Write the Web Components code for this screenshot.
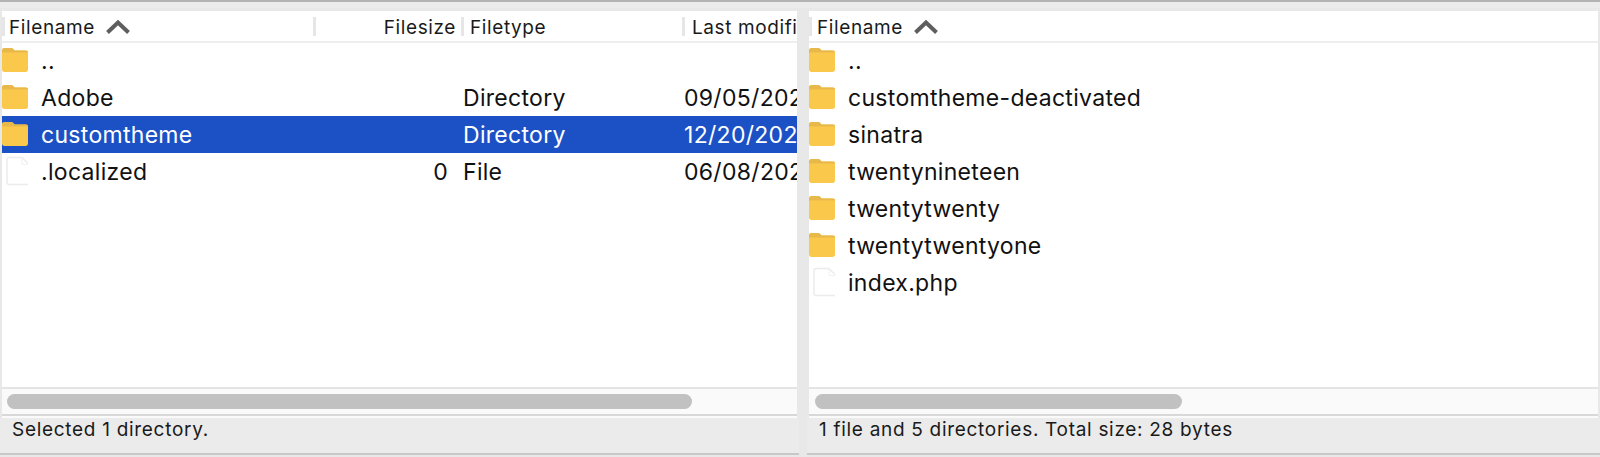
<!DOCTYPE html>
<html>
<head>
<meta charset="utf-8">
<style>
html, body { margin: 0; height: 100%; overflow: hidden; background: #e8e8e8; }
body { font-family: Inter, "Liberation Sans", sans-serif; color: #111; }
</style>
</head>
<body>

<ft-window>
  <ft-pane status="Selected 1 directory." thumb="685" inset="5" columns>
    <ft-row icon="folder" slot="rows"><span>..</span></ft-row>
    <ft-row icon="folder" slot="rows"><span>Adobe</span><span slot="type">Directory</span><span slot="date">09/05/2021</span></ft-row>
    <ft-row icon="folder" selected slot="rows"><span>customtheme</span><span slot="type">Directory</span><span slot="date">12/20/2021</span></ft-row>
    <ft-row icon="file" slot="rows"><span>.localized</span><span slot="size">0</span><span slot="type">File</span><span slot="date">06/08/2021</span></ft-row>
  </ft-pane>
  <ft-pane status="1 file and 5 directories. Total size: 28 bytes" thumb="367" inset="6">
    <ft-row icon="folder" slot="rows"><span>..</span></ft-row>
    <ft-row icon="folder" slot="rows"><span>customtheme-deactivated</span></ft-row>
    <ft-row icon="folder" slot="rows"><span>sinatra</span></ft-row>
    <ft-row icon="folder" slot="rows"><span>twentynineteen</span></ft-row>
    <ft-row icon="folder" slot="rows"><span>twentytwenty</span></ft-row>
    <ft-row icon="folder" slot="rows"><span>twentytwentyone</span></ft-row>
    <ft-row icon="file" slot="rows"><span>index.php</span></ft-row>
  </ft-pane>
</ft-window>

<script>
const COLS = '311px 148px 221px 1fr';

const ICONS = {
  folder: `<svg class="folder" width="26" height="26" viewBox="1 0 26 26">
    <path d="M1 5V3.500C1 2 2 1 3.500 1H10C11.500 1 12.500 2 13.500 3.500H24.500C26 3.500 27 4.500 27 6V22.500C27 24 26 25 24.500 25H3.500C2 25 1 24 1 22.500Z" fill="#fac94c"/>
    <path d="M1 5.500H27V4.500C26.500 3.800 25.800 3.500 24.500 3.500H13.500C12.800 2.500 12 1 10 1H3.500C2 1 1 2 1 3.500Z" fill="#e8b94a"/>
  </svg>`,
  file: `<svg class="file" width="26" height="30" viewBox="-0.500 0 26 30">
    <path d="M6.500 1.500H19.500L26.500 8.500V26.500C26.500 27.700 25.700 28.500 24.500 28.500H6.500C5.300 28.500 4.500 27.700 4.500 26.500V3.500C4.500 2.300 5.300 1.500 6.500 1.500Z" fill="#fff" stroke="#ececec" stroke-width="1.500"/>
    <path d="M19.500 1.500V8.500H26.500" fill="none" stroke="#f2f2f2" stroke-width="1.200"/>
  </svg>`
};

class FtWindow extends HTMLElement {
  constructor() {
    super();
    this.attachShadow({mode: 'open'}).innerHTML = `
      <style>
        :host { display: flex; flex-direction: column; height: 457px; background: #e8e8e8; }
        .top { height: 2px; background: #b4b4b4; }
        .band { height: 6px; background: #ececec; }
        .panes { flex: 1; display: grid; grid-template-columns: 795px 789px; column-gap: 12px; padding: 3px 2px 0; min-height: 0; }
      </style>
      <div class="top"></div>
      <div class="band"></div>
      <div class="panes"><slot></slot></div>`;
  }
}

class FtPane extends HTMLElement {
  constructor() {
    super();
    const columns = this.hasAttribute('columns');
    const inset = Number(this.getAttribute('inset'));
    this.attachShadow({mode: 'open'}).innerHTML = `
      <style>
        :host { display: flex; flex-direction: column; min-width: 0; }
        .list { height: 376px; background: #fff; display: flex; flex-direction: column; overflow: hidden; }
        .head { height: 30px; border-bottom: 2px solid #eeeeee; margin-bottom: -1px; flex: none; display: grid; grid-template-columns: ${COLS}; font-size: 19px; letter-spacing: .6px; }
        .cell { background: linear-gradient(#e6e6e6, #e6e6e6) no-repeat left 6px / 3px 19px; padding: 3px 0 0 10px; white-space: nowrap; overflow: hidden; display: flex; align-items: center; color: #1a1a1a; }
        .cell.right { justify-content: flex-end; padding-left: 0; padding-right: 5px; }
        .cell.first { padding-left: ${inset + 2}px; }
        .cell.kind { padding-left: 9px; }
        .chev { margin-left: 10px; margin-top: -2px; flex: none; }
        .track { height: 25px; flex: none; background: #fafafa; border-top: 2px solid #e4e4e4; border-bottom: 2px solid #d8d8d8; display: flex; align-items: center; padding-left: ${inset}px; }
        .thumb { height: 15px; width: ${this.getAttribute('thumb')}px; background: #c1c1c1; border-radius: 8px; }
        .gap { height: 2px; background: #fafafa; flex: none; }
        .status { height: 35px; flex: none; background: #ebebeb; font-size: 19px; letter-spacing: .7px; line-height: 24px; padding-left: 12px; margin: 0 -2px; color: #1a1a1a; border-bottom: 2px solid #c8c8c8; }
      </style>
      <div class="list">
        <div class="head">
          <div class="cell first">Filename
            <svg class="chev" width="26" height="16" viewBox="0 0 26 16"><path d="M2.500 13.500L13 3.500L23.500 13.500" fill="none" stroke="#5e5e5e" stroke-width="4"/></svg>
          </div>
          ${columns ? `
          <div class="cell right">Filesize</div>
          <div class="cell kind">Filetype</div>
          <div class="cell">Last modified</div>` : ''}
        </div>
        <slot name="rows"></slot>
      </div>
      <div class="track"><div class="thumb"></div></div>
      <div class="gap"></div>
      <div class="status">${this.getAttribute('status')}</div>`;
  }
}

class FtRow extends HTMLElement {
  constructor() {
    super();
    this.attachShadow({mode: 'open'}).innerHTML = `
      <style>
        :host { display: grid; grid-template-columns: ${COLS}; height: 37px; flex: none; font-size: 23px; letter-spacing: .3px; line-height: 39px; color: #111; white-space: nowrap; }
        :host([selected]) { background: #1c51c6; color: #fff; }
        .name { display: flex; align-items: flex-start; gap: 13px; }
        svg { display: block; flex: none; }
        svg.folder { margin-top: 5px; }
        svg.file { margin-top: 3px; }
        .size { text-align: right; padding-right: 13px; }
        .type { padding-left: 2px; }
        .date { padding-left: 2px; overflow: hidden; }
      </style>
      <div class="name">${ICONS[this.getAttribute('icon')]}<slot></slot></div>
      <div class="size"><slot name="size"></slot></div>
      <div class="type"><slot name="type"></slot></div>
      <div class="date"><slot name="date"></slot></div>`;
  }
}

customElements.define('ft-window', FtWindow);
customElements.define('ft-pane', FtPane);
customElements.define('ft-row', FtRow);
</script>
</body>
</html>
